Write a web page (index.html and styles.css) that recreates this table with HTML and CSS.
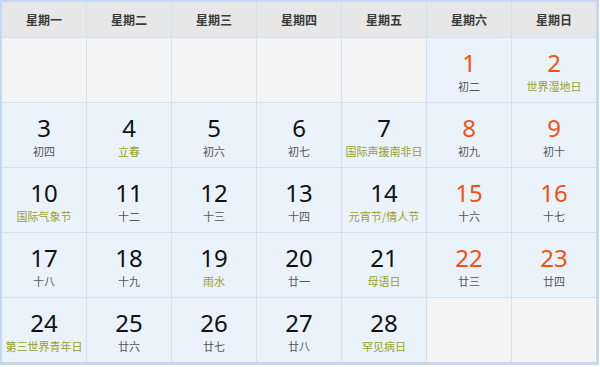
FILE: index.html
```html
<!DOCTYPE html>
<html lang="zh">
<head>
<meta charset="utf-8">
<link rel="stylesheet" href="styles.css">
</head>
<body>
<div class="cal">
  <div class="head">星期一</div>
  <div class="head">星期二</div>
  <div class="head">星期三</div>
  <div class="head">星期四</div>
  <div class="head">星期五</div>
  <div class="head">星期六</div>
  <div class="head">星期日</div>

  <div class="cell empty"></div>
  <div class="cell empty"></div>
  <div class="cell empty"></div>
  <div class="cell empty"></div>
  <div class="cell empty"></div>
  <div class="cell"><span class="num red">1</span><span class="sub">初二</span></div>
  <div class="cell"><span class="num red">2</span><span class="sub fest">世界湿地日</span></div>

  <div class="cell"><span class="num">3</span><span class="sub">初四</span></div>
  <div class="cell"><span class="num">4</span><span class="sub fest">立春</span></div>
  <div class="cell"><span class="num">5</span><span class="sub">初六</span></div>
  <div class="cell"><span class="num">6</span><span class="sub">初七</span></div>
  <div class="cell"><span class="num">7</span><span class="sub fest">国际声援南非日</span></div>
  <div class="cell"><span class="num red">8</span><span class="sub">初九</span></div>
  <div class="cell"><span class="num red">9</span><span class="sub">初十</span></div>

  <div class="cell"><span class="num">10</span><span class="sub fest">国际气象节</span></div>
  <div class="cell"><span class="num">11</span><span class="sub">十二</span></div>
  <div class="cell"><span class="num">12</span><span class="sub">十三</span></div>
  <div class="cell"><span class="num">13</span><span class="sub">十四</span></div>
  <div class="cell"><span class="num">14</span><span class="sub fest">元宵节/情人节</span></div>
  <div class="cell"><span class="num red">15</span><span class="sub">十六</span></div>
  <div class="cell"><span class="num red">16</span><span class="sub">十七</span></div>

  <div class="cell"><span class="num">17</span><span class="sub">十八</span></div>
  <div class="cell"><span class="num">18</span><span class="sub">十九</span></div>
  <div class="cell"><span class="num">19</span><span class="sub fest">雨水</span></div>
  <div class="cell"><span class="num">20</span><span class="sub">廿一</span></div>
  <div class="cell"><span class="num">21</span><span class="sub fest">母语日</span></div>
  <div class="cell"><span class="num red">22</span><span class="sub">廿三</span></div>
  <div class="cell"><span class="num red">23</span><span class="sub">廿四</span></div>

  <div class="cell"><span class="num">24</span><span class="sub fest">第三世界青年日</span></div>
  <div class="cell"><span class="num">25</span><span class="sub">廿六</span></div>
  <div class="cell"><span class="num">26</span><span class="sub">廿七</span></div>
  <div class="cell"><span class="num">27</span><span class="sub">廿八</span></div>
  <div class="cell"><span class="num">28</span><span class="sub fest">罕见病日</span></div>
  <div class="cell empty"></div>
  <div class="cell empty"></div>
</div>
</body>
</html>
```
FILE: styles.css
```css
html, body {
  margin: 0;
  padding: 0;
  background: #ffffff;
}
body {
  font-family: "Noto Sans", "Noto Sans CJK SC", sans-serif;
}
.cal {
  width: 594px;
  display: grid;
  grid-template-columns: repeat(7, 84px);
  grid-template-rows: 35px repeat(5, 64px);
  gap: 1px;
  background: #d3e0ef;
  border: 2px solid #c4d8f1;
  border-right-width: 3px;
  border-bottom-width: 3px;
}
.head {
  background: #e7e7e7;
  display: flex;
  align-items: center;
  justify-content: center;
  font-size: 12px;
  font-weight: bold;
  color: #3a3a3a;
  font-family: "Noto Sans CJK SC", sans-serif;
}
.cell {
  background: #eaf3fb;
  display: flex;
  flex-direction: column;
  align-items: center;
  padding-top: 13px;
  box-sizing: border-box;
}
.cell.empty {
  background: #f4f4f4;
}
.num {
  font-size: 24px;
  line-height: 24px;
  color: #111111;
}
.num.red {
  color: #f2520f;
}
.sub {
  font-size: 11px;
  line-height: 13px;
  margin-top: 5px;
  color: #555555;
  font-family: "Noto Sans CJK SC", sans-serif;
}
.sub.fest {
  color: #9aa01c;
}
```
